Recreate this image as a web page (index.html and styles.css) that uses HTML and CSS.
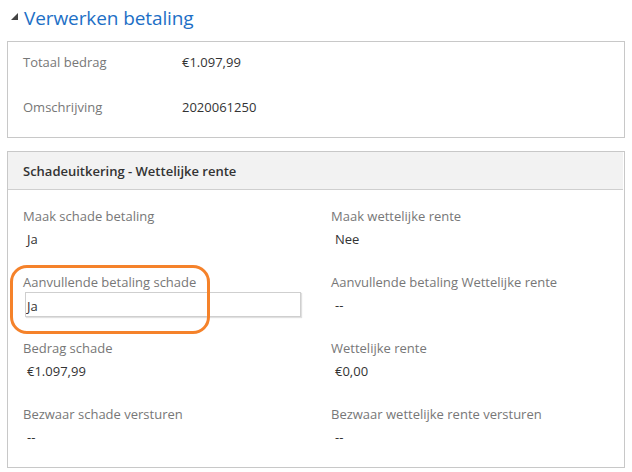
FILE: index.html
```html
<!DOCTYPE html>
<html lang="nl">
<head>
<meta charset="utf-8">
<title>Verwerken betaling</title>
<link rel="stylesheet" href="styles.css">
</head>
<body>
<div class="page">
  <h1 class="title"><span class="caret"></span>Verwerken betaling</h1>

  <section class="box summary">
    <div class="srow"><span class="slabel">Totaal bedrag</span><span class="svalue">€1.097,99</span></div>
    <div class="srow"><span class="slabel">Omschrijving</span><span class="svalue">2020061250</span></div>
  </section>

  <section class="box details">
    <div class="head">Schadeuitkering - Wettelijke rente</div>
    <div class="grid">
      <div class="cell"><div class="label">Maak schade betaling</div><div class="value">Ja</div></div>
      <div class="cell"><div class="label">Maak wettelijke rente</div><div class="value">Nee</div></div>
      <div class="cell highlight">
        <div class="label">Aanvullende betaling schade</div>
        <textarea class="field" rows="1">Ja</textarea>
        <span class="ring"></span>
      </div>
      <div class="cell"><div class="label">Aanvullende betaling Wettelijke rente</div><div class="value">--</div></div>
      <div class="cell"><div class="label">Bedrag schade</div><div class="value">€1.097,99</div></div>
      <div class="cell"><div class="label">Wettelijke rente</div><div class="value">€0,00</div></div>
      <div class="cell"><div class="label">Bezwaar schade versturen</div><div class="value">--</div></div>
      <div class="cell"><div class="label">Bezwaar wettelijke rente versturen</div><div class="value">--</div></div>
    </div>
  </section>
</div>
</body>
</html>
```

FILE: styles.css
```css
* { box-sizing: border-box; }
html, body { margin: 0; padding: 0; background: #fff; }
body {
  font-family: "Open Sans", "Noto Sans", sans-serif;
  font-size: 13px;
  line-height: 18px;
  color: #333;
}
.page { padding: 0 8px 0 7px; width: 632px; }

.title {
  margin: 0;
  height: 41px;
  padding-top: 4px;
  display: flex;
  align-items: flex-start;
  font-size: 19px;
  line-height: 28px;
  font-weight: 400;
  color: #1d6fc6;
  letter-spacing: -0.1px;
}
.caret {
  width: 0; height: 0;
  margin: 9px 6px 0 4px;
  border-left: 7px solid transparent;
  border-bottom: 7px solid #444;
}

.box {
  border: 1px solid #c8c8c8;
  width: 618px;
  background: #fff;
}
.summary {
  padding: 11px 15px 21px;
  display: flex;
  flex-direction: column;
  gap: 27px;
}
.srow { display: flex; }
.slabel { width: 159px; color: #777; }
.svalue { color: #333; }

.details { margin-top: 13px; }
.head {
  background: #f2f2f2;
  margin-right: 1px;
  height: 38px;
  padding: 10px 15px 0;
  border-bottom: 1px solid #cfcfcf;
  font-weight: 600;
  color: #333;
}
.grid {
  display: grid;
  grid-template-columns: 308px 1fr;
  row-gap: 21px;
  padding: 17px 15px 17px;
}
.cell { min-height: 45px; position: relative; }
.label { color: #777; }
.value { margin-top: 5px; padding-left: 4px; color: #333; }

.field {
  display: block;
  margin: 1px 0 0 2px;
  width: 276px;
  height: 25px;
  padding: 4px 1px 0;
  border: 1px solid #cfcfcf;
  box-shadow: 1px 1px 1px rgba(0,0,0,0.12);
  font: inherit;
  color: #333;
  resize: none;
  overflow: hidden;
  outline: none;
}
.ring {
  position: absolute;
  left: -13px;
  top: -8px;
  width: 200px;
  height: 69px;
  border: 3px solid #f5822a;
  border-radius: 17px;
  pointer-events: none;
}
```
